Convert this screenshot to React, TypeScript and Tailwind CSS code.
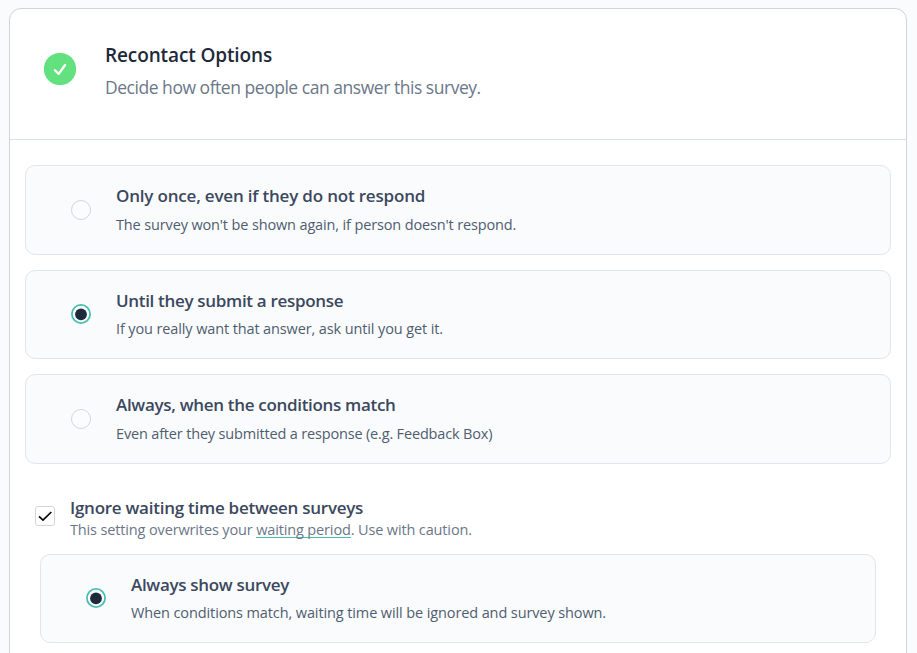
import { ReactNode } from "react";

function Radio({ checked }: { checked: boolean }) {
  return (
    <svg className={`size-5 shrink-0 ${checked ? "mt-[33px]" : "mt-[34px]"}`} viewBox="0 0 20 20" role="radio" aria-checked={checked}>
      {checked ? (
        <>
          <circle cx="10" cy="10" r="9.1" fill="#fbfdfe" stroke="#4abfad" strokeWidth="1.8" />
          <circle cx="10" cy="10.3" r="5.9" fill="#1e293b" />
        </>
      ) : (
        <circle cx="10" cy="10" r="9.5" fill="#fbfcfd" stroke="#d2d6dc" />
      )}
    </svg>
  );
}

type OptionProps = {
  title: string;
  text: string;
  checked?: boolean;
  className: string;
  titleClass: string;
  textClass: string;
};

function Option({ title, text, checked = false, className, titleClass, textClass }: OptionProps) {
  return (
    <label className={`flex items-start rounded-[10px] border border-[#e2e6eb] bg-[#f9fbfd] pl-[45px] ${className}`}>
      <Radio checked={checked} />
      <div className="ml-[25px] pt-[16px] whitespace-nowrap">
        <p className={`text-[17px] leading-[28px] font-semibold text-[#3c485d] ${titleClass}`}>{title}</p>
        <p className={`text-[14.5px] leading-[26px] text-[#505d6f] ${textClass}`}>{text}</p>
      </div>
    </label>
  );
}

function Header({ children }: { children: ReactNode }) {
  return (
    <header className="flex h-[131px] border-b border-[#dce1e6] pl-[34px]">
      <svg className="mt-[44px] size-8 shrink-0" viewBox="0 0 32 32" fill="none">
        <circle cx="16" cy="16" r="16.1" fill="#63e17e" />
        <path d="M10.9 17.2 14.7 20.9 21.1 12" stroke="white" strokeWidth="2.3" strokeLinejoin="round" strokeLinecap="round" />
      </svg>
      <div className="ml-[29px] mt-[32px] whitespace-nowrap">{children}</div>
    </header>
  );
}

export default function App() {
  return (
    <main className="h-[653px] overflow-hidden bg-[#fafbfd] pl-[9px] pr-[10px] pt-2 font-['Open_Sans',sans-serif]">
      <section className="h-[700px] rounded-xl border border-[#cfd5dc] bg-white">
        <Header>
          <h1 className="text-[19px] leading-[28px] font-semibold tracking-[-0.12px] text-[#1e293b]">Recontact Options</h1>
          <p className="mt-[4px] text-[17.5px] leading-[28px] tracking-[-0.47px] text-[#6b7789]">Decide how often people can answer this survey.</p>
        </Header>
        <div className="flex flex-col px-[15px] pt-[25px]">
          <Option className="h-[90px]" title="Only once, even if they do not respond" text="The survey won't be shown again, if person doesn't respond." titleClass="tracking-[-0.19px]" textClass="mt-[2px] tracking-[-0.14px]" />
          <Option className="mt-[15px] h-[89px]" checked title="Until they submit a response" text="If you really want that answer, ask until you get it." titleClass="tracking-[-0.32px]" textClass="mt-[1px] tracking-[-0.12px]" />
          <Option className="mt-[15px] h-[90px]" title="Always, when the conditions match" text="Even after they submitted a response (e.g. Feedback Box)" titleClass="tracking-[-0.31px]" textClass="mt-[2px] tracking-[-0.17px]" />
          <div className="mt-[32px] flex h-[48px] pl-[10px]">
            <span className="mt-[10px] flex size-5 shrink-0 items-center justify-center rounded-[3px] border border-[#d2d6dc] bg-white">
              <svg className="size-[18px]" viewBox="0 0 18 18" fill="none">
                <path d="M3 9.4 7 13.1 15.3 5" stroke="#050505" strokeWidth="1.7" />
              </svg>
            </span>
            <div className="ml-[15px] whitespace-nowrap">
              <h2 className="text-[17px] leading-[24px] font-semibold tracking-[-0.26px] text-[#3c485d]">Ignore waiting time between surveys</h2>
              <p className="text-[14.5px] leading-[20px] tracking-[-0.14px] text-[#6b7789]">
                This setting overwrites your <a className="inline-block border-b border-[#4abfad] leading-[15px]">waiting period</a>. Use with caution.
              </p>
            </div>
          </div>
          <Option className="mx-[15px] mt-[10px] h-[89px]" checked title="Always show survey" text="When conditions match, waiting time will be ignored and survey shown." titleClass="tracking-[-0.31px]" textClass="mt-[1px] tracking-[-0.11px]" />
        </div>
      </section>
    </main>
  );
}
